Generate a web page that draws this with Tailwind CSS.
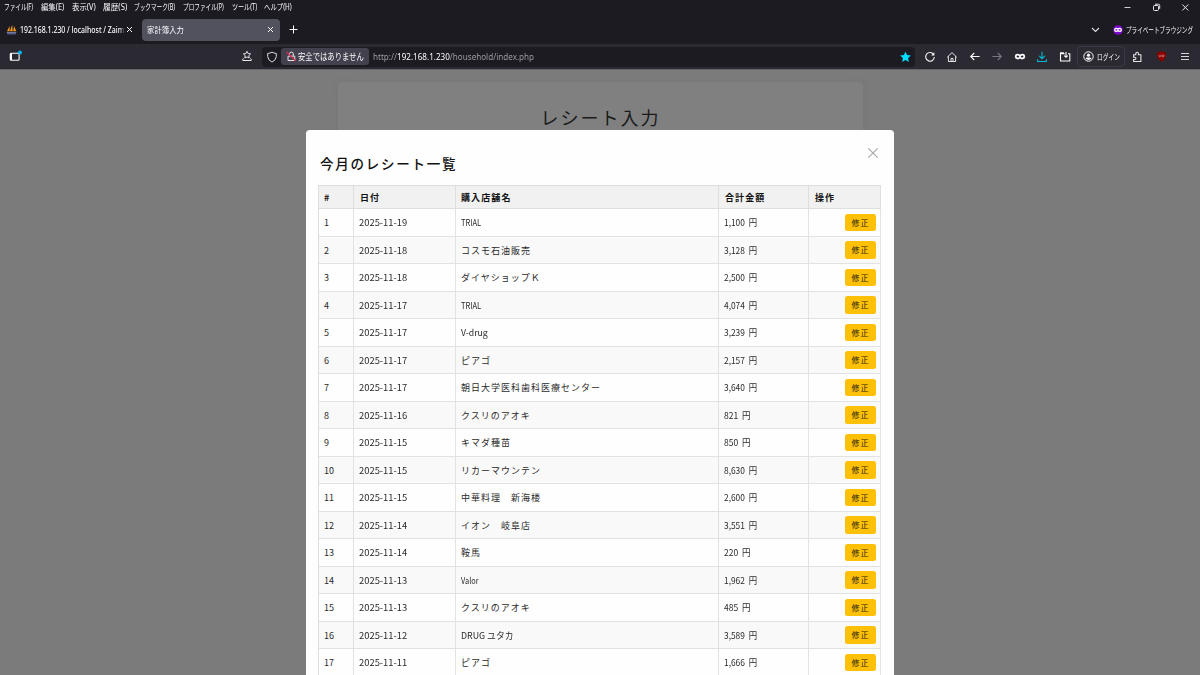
<!DOCTYPE html>
<html lang="ja">
<head>
<meta charset="utf-8">
<title>家計簿入力</title>
<script src="https://cdn.jsdelivr.net/npm/@tailwindcss/browser@4"></script>
</head>
<body class="w-[1200px] h-[675px] overflow-hidden bg-[#7b7b7b] flex flex-col font-['Noto_Sans','Noto_Sans_CJK_JP',sans-serif] text-[#fbfbfe]">
<header class="shrink-0 bg-[#1c1b22]">
  <div class="h-[15px] flex justify-between">
    <nav class="flex pl-[4px] h-[14px] items-center text-[8px] whitespace-nowrap leading-none">
      <span class="w-[37px]"><span data-fit="29" class="inline-block origin-left">ファイル(F)</span></span>
      <span class="w-[31px]"><span data-fit="23" class="inline-block origin-left">編集(E)</span></span>
      <span class="w-[31px]"><span data-fit="24" class="inline-block origin-left">表示(V)</span></span>
      <span class="w-[31px]"><span data-fit="24" class="inline-block origin-left">履歴(S)</span></span>
      <span class="w-[49px]"><span data-fit="41" class="inline-block origin-left">ブックマーク(B)</span></span>
      <span class="w-[49px]"><span data-fit="41" class="inline-block origin-left">プロファイル(P)</span></span>
      <span class="w-[32px]"><span data-fit="25" class="inline-block origin-left">ツール(T)</span></span>
      <span><span data-fit="28" class="inline-block origin-left">ヘルプ(H)</span></span>
    </nav>
    <div class="flex h-[14px] gap-[16px] pr-[8px] items-center">
      <svg class="size-[13px]" viewBox="0 0 13 13" stroke="#d0d0d6" fill="none"><path d="M3.5 6.5h6"/></svg>
      <svg class="size-[13px]" viewBox="0 0 13 13" stroke="#e8e8ee" fill="none"><rect x="3.5" y="4.5" width="5" height="5" rx="1"/><path d="M5 3.2h3.4q1.3 0 1.3 1.3v3.3"/></svg>
      <svg class="size-[13px]" viewBox="0 0 13 13" stroke="#e8e8ee" fill="none"><path d="M3.3 3.5l6 6m0-6l-6 6"/></svg>
    </div>
  </div>
  <div class="h-[29px] flex items-center">
    <div class="w-[142px] h-[22px] flex items-center pl-[6px] text-[8px] whitespace-nowrap">
      <svg class="w-[11px] h-[11px] mr-[3px] shrink-0" viewBox="0 0 11 11"><path d="M1 7.3L3.6 2v5.3zM4 7.3L6.1.8 6.7 7.3zM7.2 7.3L8 2l2.3 5.3z" fill="#f59a1c"/><path d="M.4 8h10.2L9.5 9.7H1.7z" fill="#7378a5"/><path d="M1 10.2h9" stroke="#555a86" stroke-width=".7"/></svg>
      <span class="w-[105px] overflow-hidden [mask-image:linear-gradient(to_right,#000_95%,transparent)]"><span data-fit="104" class="inline-block origin-left font-medium">192.168.1.230 / localhost / Zaim</span></span>
      <svg class="size-[9px] shrink-0" viewBox="0 0 9 9" stroke="#fbfbfe" fill="none"><path d="M2 2l5 5m0-5l-5 5"/></svg>
    </div>
    <div class="w-[138px] h-[22px] bg-[#52525e] rounded-[4px] flex items-center justify-between pl-[5px] pr-[5.5px] text-[8px]">
      <span data-fit="37" class="inline-block whitespace-nowrap origin-left">家計簿入力</span>
      <svg class="size-[9px]" viewBox="0 0 9 9" stroke="#fbfbfe" fill="none"><path d="M2 2l5 5m0-5l-5 5"/></svg>
    </div>
    <svg class="size-[11px] ml-[8px]" viewBox="0 0 11 11" stroke="#fbfbfe" fill="none"><path d="M5.5 1.5v8M1.5 5.5h8"/></svg>
    <svg class="size-[11px] ml-auto" viewBox="0 0 11 11" stroke="#e0e0e6" fill="none" stroke-width="1.1"><path d="M2 4l3.5 3.5L9 4"/></svg>
    <svg class="size-[10px] ml-[12px]" viewBox="0 0 10 10"><circle cx="5" cy="5" r="4.8" fill="#7a08cc"/><path d="M5 4.3C4 3 1.7 3.2 1.7 5S4 6.8 5 5.4C6 6.8 8.3 6.8 8.3 5S6 3 5 4.3z" fill="none" stroke="#fff" stroke-width="1.3"/></svg>
    <span class="w-[67px] ml-[3px] mr-[7px] whitespace-nowrap text-[8px]"><span data-fit="67" class="inline-block origin-left">プライベートブラウジング</span></span>
  </div>
  <div class="h-[25px] bg-[#2b2a33] grid grid-cols-[262px_653px_4px_22px_22px_23px_22px_23px_22px_23px_48px_26px_22px_25px] items-center">
    <div class="h-[25px] pb-[1px] flex items-center justify-between pl-[8px] pr-[9px]">
      <svg class="w-[14px] h-[13px]" viewBox="0 0 14 13"><rect x="2.3" y="3.2" width="8.8" height="7" rx="1" fill="none" stroke="#fbfbfe" stroke-width="1.1"/><path d="M3 3v7" stroke="#fbfbfe" stroke-width="2"/><circle cx="12" cy="2.5" r="2" fill="#00b3f4"/></svg>
      <svg class="size-[12px]" viewBox="0 0 12 12" fill="none" stroke="#e4e4ea"><path d="M6 1.3L7.1 3.5 9.6 3.9 7.8 5.6 8.2 8 6 6.9 3.8 8 4.2 5.6 2.4 3.9 4.9 3.5z"/><path d="M2.6 8.5L1.8 9v1.5h8.4V9L9.4 8.5"/></svg>
    </div>
    <div class="h-[20px] bg-[#1c1b22] rounded-[4px] flex items-center pl-[4px] pr-[4px] whitespace-nowrap">
      <svg class="size-[12px]" viewBox="0 0 12 12" fill="none" stroke="#dcdce2"><path d="M6 1.2Q8.2 2.3 10.3 2.5V5.5Q10 9.3 6 11.1Q2 9.3 1.7 5.5V2.5Q3.8 2.3 6 1.2z"/></svg>
      <div class="w-[88px] h-[17px] ml-[3px] rounded-[3px] bg-[#42414d] flex items-center pl-[5px] text-[9px]">
        <svg class="size-[11px] mr-[1px] shrink-0" viewBox="0 0 11 11" fill="none"><path d="M3.5 5V3a1.9 1.9 0 013.8 0V5M2 5.2h6.8v4.3H2z" stroke="#e4e4ea"/><path d="M.6 1l9 9" stroke="#e22850" stroke-width="1.2"/></svg>
        <span data-fit="66" class="inline-block origin-left">安全ではありません</span>
      </div>
      <span class="ml-[3.5px] text-[9px] text-[#9b9ba2] w-[161px]"><span data-fit="161" class="inline-block origin-left">http://<span class="text-[#fbfbfe]">192.168.1.230</span>/household/index.php</span></span>
      <svg class="size-[12px] ml-auto" viewBox="0 0 12 12" fill="#00ddff"><path d="M6.5.7l1.6 3.4 3.8.4-2.8 2.6.7 3.8L6.5 9 3.2 10.9l.7-3.8L1.1 4.5l3.8-.4z"/></svg>
    </div>
    <span></span>
    <svg class="size-[12px] justify-self-center" viewBox="0 0 12 12" fill="none" stroke="#f0f0f4" stroke-width="1.1"><path d="M9.6 3.5A4.3 4.3 0 1010.3 6"/><path d="M10.4 1.3v3.2H7.2z" fill="#fbfbfe" stroke="none"/></svg>
    <svg class="size-[12px] justify-self-center" viewBox="0 0 12 12" fill="none" stroke="#e4e4ea"><path d="M1.2 6.3L6 1.6 10.8 6.3M2.4 5.4v5.1h7.2V5.4M5 10.3V7.5h2v2.8"/></svg>
    <svg class="size-[12px] justify-self-center" viewBox="0 0 12 12" fill="none" stroke="#fbfbfe" stroke-width="1.1"><path d="M10.6 5.5H1.8M5.2 2L1.7 5.5l3.5 3.5"/></svg>
    <svg class="size-[12px] justify-self-center" viewBox="0 0 12 12" fill="none" stroke="#77767e" stroke-width="1.1"><path d="M1.4 5.5h8.8M6.8 2L10.3 5.5 6.8 9"/></svg>
    <svg class="size-[12px] justify-self-center" viewBox="0 0 12 12"><path d="M6 4.9C4.6 3 1.7 3.2 1.7 5.6S4.6 8 6 6.2C7.4 8 10.3 8 10.3 5.6S7.4 3 6 4.9z" fill="none" stroke="#fff" stroke-width="1.8"/></svg>
    <svg class="size-[12px] justify-self-center" viewBox="0 0 12 12" fill="none" stroke="#00b7d6" stroke-width="1.1"><path d="M6 .8v6.6M3.2 4.8L6 7.6l2.8-2.8M1.6 8.2v2.3h8.8V8.2"/></svg>
    <svg class="size-[12px] justify-self-center" viewBox="0 0 12 12" fill="none" stroke="#fbfbfe" stroke-width="1.1"><path d="M9 2.7h1.8V10H1.5V2M7 1v5.2M5.3 4.6L7 6.3l1.7-1.7"/><path d="M1 1.2h3.6L6 3.3H1z" fill="#fbfbfe" stroke="none"/></svg>
    <div class="h-[21px] ml-[1px] -mr-[1px] border border-[#3b3a44] rounded-[4px] flex items-center pl-[4.5px] text-[8px] whitespace-nowrap">
      <svg class="size-[11px] mr-[3px] shrink-0" viewBox="0 0 11 11"><circle cx="5.5" cy="5.5" r="4.7" fill="none" stroke="#fbfbfe"/><circle cx="5.5" cy="4.2" r="1.6" fill="#fbfbfe"/><path d="M2.6 7.8q.3-1.4 1.5-1.4h2.8q1.2 0 1.5 1.4-2.9 2.2-5.8 0z" fill="#fbfbfe"/></svg>
      <span data-fit="23" class="inline-block origin-left">ログイン</span>
    </div>
    <svg class="size-[12px] justify-self-center" viewBox="0 0 12 12" fill="none" stroke="#e4e4ea" stroke-width="1.1"><path d="M2.6 3.8h2.2V2.5a1.3 1.3 0 012.6 0v1.3h2.5v6.7H2.6v-2h1.2a1.1 1.1 0 000-2.2H2.6z"/></svg>
    <svg class="size-[11px] justify-self-center" viewBox="0 0 11 11"><path d="M5.5.2Q7.7 1.3 10 1.4 10.3 8.3 5.5 10.7.7 8.3 1 1.4 3.3 1.3 5.5.2z" fill="#8a0000"/><path d="M3 3.9v1.5q.9 1 1.7 0V3.9M6.2 3.9v1.9q2 .1 2-1t-2-.9z" fill="none" stroke="#dcaaaa" stroke-width=".6"/></svg>
    <svg class="size-[11px] justify-self-center" viewBox="0 0 11 11" stroke="#d4d4da"><path d="M2 2.5h8M2 5.5h8M2 8.5h8"/></svg>
  </div>
</header>
<div class="h-px shrink-0 bg-[#666568]"></div>

<main class="relative flex-1 overflow-hidden font-['Noto_Sans_CJK_JP',sans-serif]">
  <section class="w-[525px] h-[90px] mt-[12px] ml-[337.5px] rounded-[4px] bg-[#808080] shadow-[0_0_5px_#75757588] pt-[23px] text-center">
    <h1 class="text-[18px] leading-[24px] tracking-[2px] pl-[1px] text-[#1a1a1a] font-normal">レシート入力</h1>
  </section>
  <section class="absolute left-[306px] top-[60px] w-[588px] h-[620px] bg-[#fefefe] rounded-t-[4px] text-[#2a2a2a] px-[12px]">
    <div class="flex justify-between h-[55px]">
      <h2 class="pt-[21px] pl-[2px] text-[13.5px] leading-[24px] tracking-[1.75px] font-medium text-[#111]">今月のレシート一覧</h2>
      <svg class="size-[12px] mt-[17px] mr-[3.5px]" viewBox="0 0 12 12" stroke="#aaa" fill="none" stroke-width="1.2"><path d="M1.3 1.3l9.4 9.4m0-9.4l-9.4 9.4"/></svg>
    </div>
    <div class="w-[563px] border-l border-t border-[#dedede]">
      <div class="grid grid-cols-[35px_102px_263px_90px_72px] h-[23px] bg-[#f1f1f1] text-[9px] tracking-[1.1px] font-bold text-[#111] leading-[21px]">
        <div class="border-r border-b border-[#dedede] pt-px pl-[5px]">#</div>
        <div class="border-r border-b border-[#dedede] pt-px pl-[6px]">日付</div>
        <div class="border-r border-b border-[#dedede] pt-px pl-[5px]">購入店舗名</div>
        <div class="border-r border-b border-[#dedede] pt-px pl-[6px]">合計金額</div>
        <div class="border-r border-b border-[#dedede] pt-px pl-[6px]">操作</div>
      </div>
      <div id="rows"></div>
    </div>
  </section>
</main>
<script>
const receipts = [
  ['2025-11-19','TRIAL','1,100'],
  ['2025-11-18','コスモ石油販売','3,128'],
  ['2025-11-18','ダイヤショップＫ','2,500'],
  ['2025-11-17','TRIAL','4,074'],
  ['2025-11-17','V-drug','3,239'],
  ['2025-11-17','ピアゴ','2,157'],
  ['2025-11-17','朝日大学医科歯科医療センター','3,640'],
  ['2025-11-16','クスリのアオキ','821'],
  ['2025-11-15','キマダ種苗','850'],
  ['2025-11-15','リカーマウンテン','8,630'],
  ['2025-11-15','中華料理　新海楼','2,600'],
  ['2025-11-14','イオン　岐阜店','3,551'],
  ['2025-11-14','鞍馬','220'],
  ['2025-11-13','Valor','1,962'],
  ['2025-11-13','クスリのアオキ','485'],
  ['2025-11-12','DRUG ユタカ','3,589'],
  ['2025-11-11','ピアゴ','1,666']
];
const latinWidths = { 'TRIAL': 20, 'V-drug': 27, 'Valor': 18, 'DRUG ユタカ': 53 };
document.getElementById('rows').innerHTML = receipts.map(([date, shop, price], i) => `
  <div class="grid grid-cols-[35px_102px_263px_90px_72px] h-[27.5px] leading-[25.5px] text-[9px] whitespace-nowrap ${i % 2 ? 'bg-[#f9f9f9]' : 'bg-[#fefefe]'}">
    <div class="border-r border-b border-[#e2e2e2] pt-px pl-[5px]">${i + 1}</div>
    <div class="border-r border-b border-[#e2e2e2] pt-px pl-[5px]"><span data-fit="48" class="inline-block origin-left">${date}</span></div>
    <div class="border-r border-b border-[#e2e2e2] pt-px pl-[5px]">${latinWidths[shop]
      ? `<span data-fit="${latinWidths[shop]}" class="inline-block origin-left">${shop}</span>`
      : `<span class="tracking-[1px]">${shop}</span>`}</div>
    <div class="border-r border-b border-[#e2e2e2] pt-px pl-[5px]"><span data-fit="${price.length > 3 ? 33.5 : 26.5}" class="inline-block origin-left">${price}&nbsp; 円</span></div>
    <div class="border-r border-b border-[#e2e2e2] flex items-center justify-end pr-[4.5px]"><button class="w-[31px] h-[17.5px] bg-[#ffc107] rounded-[2.5px] text-[8px] leading-[17px] tracking-[1px] pl-[1px] text-[#2a2410]">修正</button></div>
  </div>`).join('');
const fitter = new ResizeObserver(entries => {
  for (const { target } of entries) {
    target.style.transform = `scaleX(${target.dataset.fit / target.offsetWidth})`;
  }
});
document.querySelectorAll('[data-fit]').forEach(el => fitter.observe(el));
</script>
</body>
</html>
